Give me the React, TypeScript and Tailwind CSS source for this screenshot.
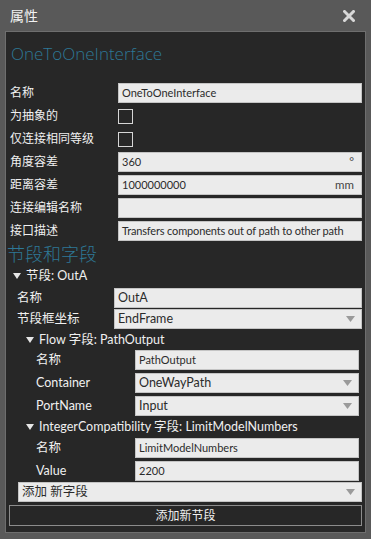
import React from "react";

function Tri({ color = "#e6e6e6" }: { color?: string }) {
  return (
    <svg width="8" height="6" viewBox="0 0 8 6" className="shrink-0">
      <path d="M0 0 L8 0 L4 6 Z" fill={color} />
    </svg>
  );
}

function TextBox({ value, w, suffix, big, tight }: { value: string; w: string; suffix?: string; big?: boolean; tight?: boolean }) {
  return (
    <div className={`${w} h-[20px] bg-[#ebebeb] border border-[#c4c4c4] flex items-center pl-[3px] pr-[7px] text-[#2b2b2b] ${big ? "text-[12.5px]" : "text-[11px]"} ${tight ? "tracking-[-0.15px] pr-[2px]" : ""}`}>
      <span className="flex-1 whitespace-nowrap">{value}</span>
      {suffix && <span className="text-[11.5px] text-[#444]">{suffix}</span>}
    </div>
  );
}

function Combo({ value, w }: { value: string; w: string }) {
  return (
    <div className={`${w} h-[20px] bg-[#ebebeb] border border-[#c4c4c4] flex items-center pl-[3px] pr-[6px] text-[#2b2b2b] text-[12.5px]`}>
      <span className="flex-1 whitespace-nowrap">{value}</span>
      <svg width="9" height="6" viewBox="0 0 9 6">
        <path d="M0 0 L9 0 L4.5 6 Z" fill="#9a9a9a" />
      </svg>
    </div>
  );
}

function Check() {
  return <div className="w-[15px] h-[15px] border border-[#d6d6d6]" />;
}

export default function App() {
  return (
    <div className="w-[371px] h-[539px] bg-[#595959] flex flex-col font-['Lato','Noto_Sans_CJK_SC',sans-serif] text-[#f0f0f0] overflow-hidden">
      {/* header */}
      <div className="h-[31px] shrink-0 flex items-center pl-[10px] pr-[16px]">
        <span className="text-[14px] leading-none text-[#f2f2f2] flex-1">属性</span>
        <svg width="12" height="12" viewBox="0 0 12 12">
          <path d="M1.5 1.5 L10.5 10.5 M10.5 1.5 L1.5 10.5" stroke="#d8d8d8" strokeWidth="3" strokeLinecap="square" />
        </svg>
      </div>
      {/* panel */}
      <div className="mx-[5px] mb-[6px] flex-1 bg-[#272727] border border-[#6e6e6e] flex flex-col">
        <div className="mt-[10px] ml-[5px] h-[24px] leading-[24px] text-[17px] font-light text-[#2e7896] whitespace-nowrap font-['Open_Sans',sans-serif]">
          OneToOneInterface
        </div>

        <div className="mt-[17px] flex flex-col gap-[3px]">
          {[
            { l: "名称", el: <TextBox value="OneToOneInterface" w="w-[244px]" /> },
            { l: "为抽象的", el: <Check /> },
            { l: "仅连接相同等级", el: <Check /> },
            { l: "角度容差", el: <TextBox value="360" w="w-[244px]" suffix="°" /> },
            { l: "距离容差", el: <TextBox value="1000000000" w="w-[244px]" suffix="mm" /> },
            { l: "连接编辑名称", el: <TextBox value="" w="w-[244px]" /> },
            { l: "接口描述", el: <TextBox value="Transfers components out of path to other path" w="w-[244px]" tight /> },
          ].map((r, i) => (
            <div key={i} className="h-[20px] flex items-center">
              <span className="w-[112px] pl-[4px] text-[12px] whitespace-nowrap">{r.l}</span>
              {r.el}
            </div>
          ))}
        </div>

        <div className="mt-[2px] ml-[1px] h-[22px] leading-[22px] text-[18px] font-light text-[#2e7896]">节段和字段</div>

        {/* section */}
        <div className="mt-[1px] h-[20px] flex items-center gap-[5px] pl-[7px] text-[12.5px]">
          <Tri />
          <span>节段: OutA</span>
        </div>
        <div className="mt-[2px] flex flex-col gap-[1px]">
          <div className="h-[20px] flex items-center">
            <span className="w-[108px] pl-[11px] text-[12.5px]">名称</span>
            <TextBox value="OutA" w="w-[248px]" big />
          </div>
          <div className="h-[20px] flex items-center">
            <span className="w-[108px] pl-[11px] text-[12.5px]">节段框坐标</span>
            <Combo value="EndFrame" w="w-[248px]" />
          </div>
        </div>

        {/* flow */}
        <div className="mt-[1px] h-[20px] flex items-center gap-[5px] pl-[20px] text-[12.5px]">
          <Tri />
          <span>Flow 字段: PathOutput</span>
        </div>
        <div className="flex flex-col gap-[3px]">
          <div className="h-[20px] flex items-center">
            <span className="w-[129px] pl-[30px] text-[12.5px]">名称</span>
            <TextBox value="PathOutput" w="w-[224px]" />
          </div>
          <div className="h-[20px] flex items-center">
            <span className="w-[129px] pl-[30px] text-[12.5px]">Container</span>
            <Combo value="OneWayPath" w="w-[224px]" />
          </div>
          <div className="h-[20px] flex items-center">
            <span className="w-[129px] pl-[30px] text-[12.5px]">PortName</span>
            <Combo value="Input" w="w-[224px]" />
          </div>
        </div>

        {/* integer */}
        <div className="mt-[1px] h-[20px] flex items-center gap-[5px] pl-[20px] text-[12.5px]">
          <Tri />
          <span>IntegerCompatibility 字段: LimitModelNumbers</span>
        </div>
        <div className="mt-[1px] flex flex-col gap-[3px]">
          <div className="h-[20px] flex items-center">
            <span className="w-[129px] pl-[30px] text-[12.5px]">名称</span>
            <TextBox value="LimitModelNumbers" w="w-[224px]" />
          </div>
          <div className="h-[20px] flex items-center">
            <span className="w-[129px] pl-[30px] text-[12.5px]">Value</span>
            <TextBox value="2200" w="w-[224px]" />
          </div>
        </div>

        <div className="mt-[1px] ml-[12px]">
          <Combo value="添加 新字段" w="w-[344px]" />
        </div>

        <div className="mt-[3px] ml-[3px] w-[353px] h-[21px] border border-[#8c8c8c] flex items-center justify-center text-[12px] text-[#f0f0f0]">
          添加新节段
        </div>
      </div>
    </div>
  );
}
